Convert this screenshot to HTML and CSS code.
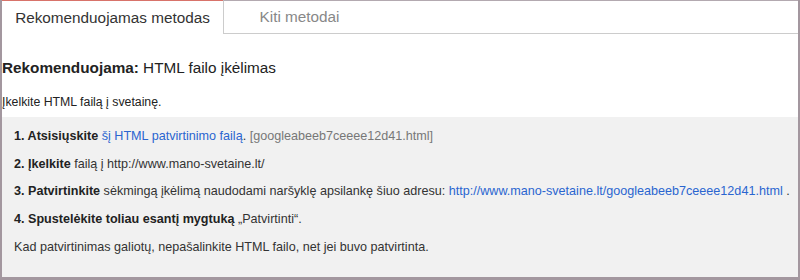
FILE: index.html
```html
<!DOCTYPE html>
<html lang="lt">
<head>
<meta charset="utf-8">
<link rel="stylesheet" href="styles.css">
</head>
<body>
<div class="frame">
  <div class="tabs">
    <div class="tab active">Rekomenduojamas metodas</div>
    <div class="tab">Kiti metodai</div>
    <div class="tab-fill"></div>
  </div>
  <div class="intro">
    <h2 class="title"><b>Rekomenduojama:</b> HTML failo įkėlimas</h2>
    <p class="lead">Įkelkite HTML failą į svetainę.</p>
  </div>
  <div class="steps">
    <p class="step"><b>1. Atsisiųskite</b> <a class="link">šį HTML patvirtinimo failą</a>. <span class="muted">[googleabeeb7ceeee12d41.html]</span></p>
    <p class="step"><b>2. Įkelkite</b> failą į http://www.mano-svetaine.lt/</p>
    <p class="step"><b>3. Patvirtinkite</b> sėkmingą įkėlimą naudodami naršyklę apsilankę šiuo adresu: <a class="link">http://www.mano-svetaine.lt/googleabeeb7ceeee12d41.html</a> .</p>
    <p class="step"><b>4. Spustelėkite toliau esantį mygtuką</b> „Patvirtinti“.</p>
    <p class="step">Kad patvirtinimas galiotų, nepašalinkite HTML failo, net jei buvo patvirtinta.</p>
  </div>
</div>
</body>
</html>
```

FILE: styles.css
```css
html, body {
  margin: 0;
  padding: 0;
  background: #fff;
}
body {
  font-family: "Liberation Sans", Arial, sans-serif;
  color: #222;
}
.frame {
  width: 800px;
  height: 280px;
  box-sizing: border-box;
  border-left: 2px solid #a3979f;
  border-right: 2px solid #a3979f;
  border-bottom: 3px solid #a3979f;
  display: flex;
  flex-direction: column;
  overflow: hidden;
}
.tabs {
  display: flex;
  height: 34px;
  flex: none;
}
.tab {
  box-sizing: border-box;
  height: 34px;
  display: flex;
  align-items: center;
  justify-content: center;
  font-size: 15.3px;
  color: #888;
  width: 152px;
  border-top: 1px solid #b3a9b0;
  border-left: 1px solid #ccc;
  border-bottom: 1px solid #ccc;
}
.tab.active {
  width: 221px;
  color: #333;
  border-top: 1px solid #d8736a;
  border-left: none;
  border-bottom: none;
}
.tab-fill {
  flex: 1;
  border-top: 1px solid #b3a9b0;
  border-bottom: 1px solid #ccc;
}
.title {
  margin: 24px 0 0 0;
  font-size: 15.3px;
  font-weight: normal;
  line-height: 19px;
  color: #222;
}
.title b {
  font-weight: bold;
}
.lead {
  margin: 18px 0 0 0;
  font-size: 12.3px;
  line-height: 15px;
  color: #222;
}
.steps {
  margin-top: 7px;
  flex: 1;
  background: #f1f1f1;
  padding: 12px 0 0 12px;
}
.step {
  margin: 0 0 12.3px 0;
  font-size: 12.6px;
  line-height: 15.4px;
  color: #333;
  white-space: nowrap;
}
.step b {
  color: #222;
}
.link {
  color: #2a65d0;
  text-decoration: none;
}
.muted {
  color: #777;
}
```
